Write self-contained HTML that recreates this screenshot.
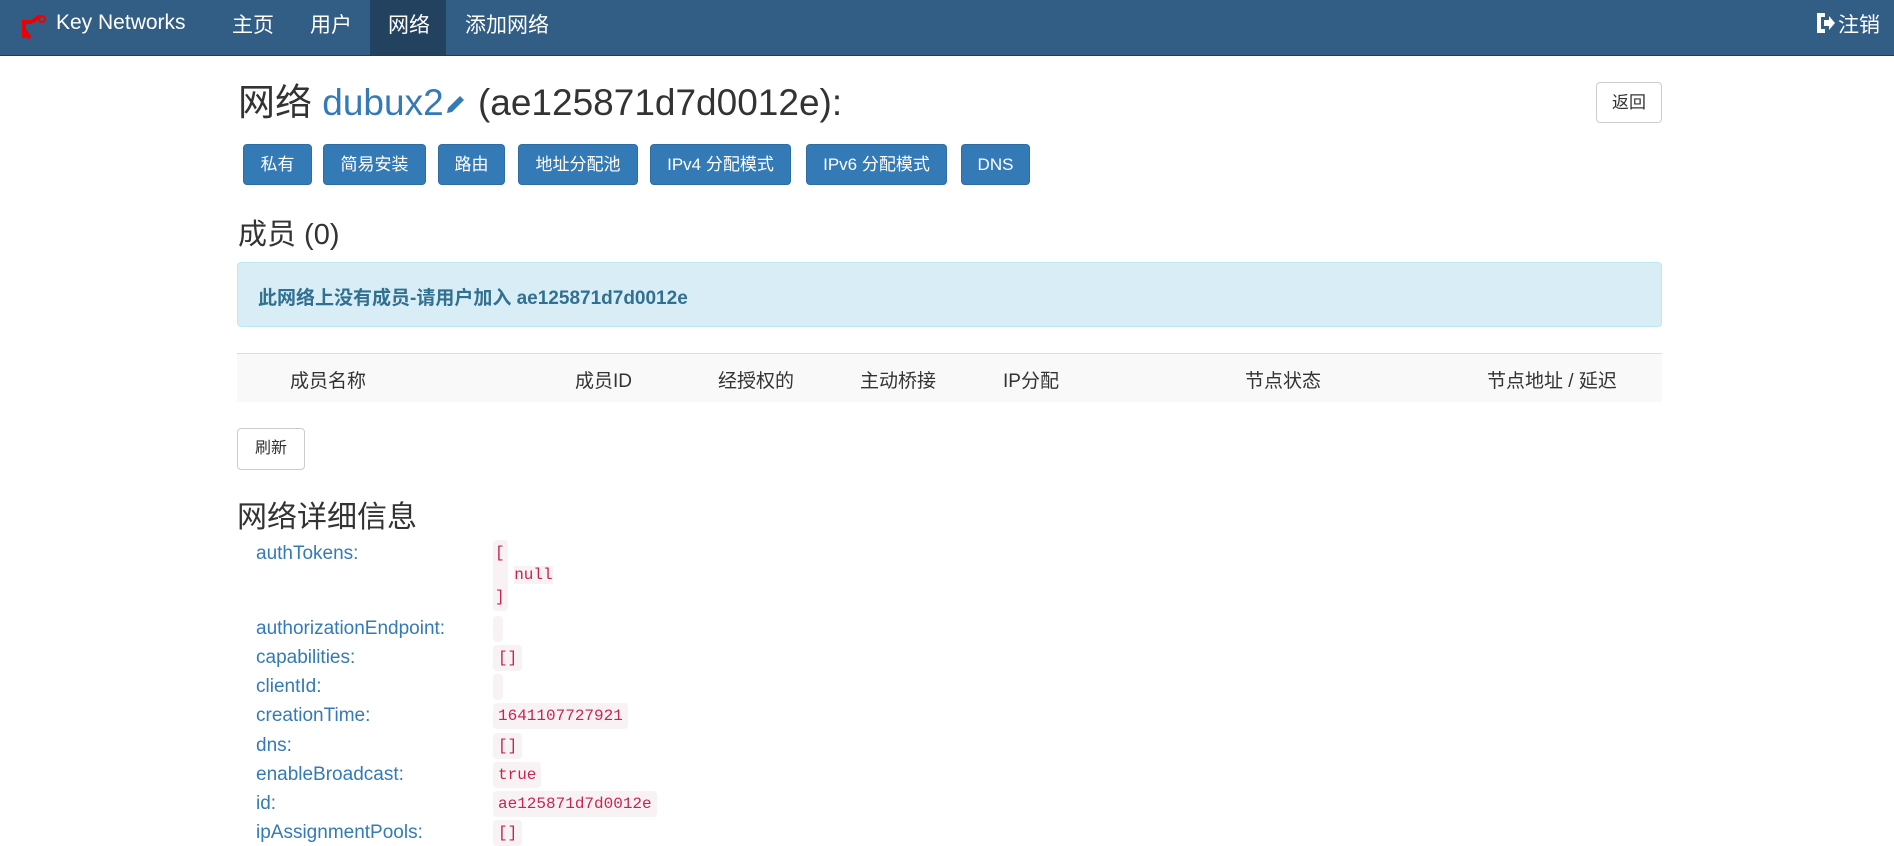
<!DOCTYPE html>
<html><head><meta charset="utf-8"><style>
*{box-sizing:border-box;margin:0;padding:0}
body{width:1894px;height:836px;overflow:hidden;background:#fff;font-family:"Liberation Sans","Noto Sans CJK SC",sans-serif;color:#333;position:relative}
.a{position:absolute;white-space:nowrap}
.nav{position:absolute;left:0;top:0;width:1894px;height:56px;background:#325d84;border-bottom:1px solid #1f3a55}
.nav .a{color:#fff;font-size:21px;top:9px}
.btn{position:absolute;background:#337ab7;border:1px solid #2e6da4;border-radius:4px;color:#fff;font-size:17px;text-align:center;line-height:39px;height:41px;top:144px}
.dbtn{position:absolute;background:#fff;border:1px solid #ccc;border-radius:4px;color:#333;font-size:17px;text-align:center}
.th{position:absolute;top:366px;font-size:19px;color:#333}
.lbl{position:absolute;left:256px;font-size:19px;color:#337ab7}
.code{position:absolute;left:493px;font-family:"Liberation Mono","DejaVu Sans Mono",monospace;font-size:16px;color:#c7254e;background:#f9f2f4;border-radius:4px;padding:2px 5px;line-height:22px;white-space:pre}
</style></head><body>
<div class="nav">
<svg class="a" style="left:20px;top:14px" width="28" height="26" viewBox="0 0 28 26"><path d="M2 8h10M4 8v16M4 16l6 8M12 8l8-6" stroke="#e00" stroke-width="4" fill="none"/><circle cx="22" cy="5" r="3" fill="none" stroke="#e00" stroke-width="2"/></svg>
<div class="a" style="left:56px;color:#fff;top:11px!important">Key Networks</div>
<div class="a" style="left:232px">主页</div>
<div class="a" style="left:310px">用户</div>
<div style="position:absolute;left:370px;top:0;width:76px;height:55px;background:#234260"></div>
<div class="a" style="left:388px">网络</div>
<div class="a" style="left:465px">添加网络</div>
<svg class="a" style="left:1816px;top:13px" width="20" height="20" viewBox="0 0 20 20"><path d="M9 2H3v16h6" stroke="#fff" stroke-width="4" fill="none"/><path d="M8 7h5V3l6 7-6 7v-4H8z" fill="#fff"/></svg>
<div class="a" style="left:1838px">注销</div>
</div>
<div class="a" style="left:238px;top:72px;font-size:37px;color:#333">网络 <span style="color:#337ab7">dubux2</span><svg width="24" height="24" viewBox="0 0 24 24" style="vertical-align:-1px"><path d="M3 21l1-5L16 4l4 4L8 20z" fill="#337ab7"/></svg> (ae125871d7d0012e):</div>
<div class="dbtn" style="left:1596px;top:82px;width:66px;height:41px;line-height:39px">返回</div>
<div class="btn" style="left:243px;width:69px">私有</div>
<div class="btn" style="left:323px;width:103px">简易安装</div>
<div class="btn" style="left:438px;width:67px">路由</div>
<div class="btn" style="left:518px;width:120px">地址分配池</div>
<div class="btn" style="left:650px;width:141px">IPv4 分配模式</div>
<div class="btn" style="left:806px;width:141px">IPv6 分配模式</div>
<div class="btn" style="left:961px;width:69px">DNS</div>
<div class="a" style="left:238px;top:211px;font-size:29px">成员 (0)</div>
<div style="position:absolute;left:237px;top:262px;width:1425px;height:65px;background:#d9edf7;border:1px solid #bce8f1;border-radius:4px"></div>
<div class="a" style="left:258px;top:283px;font-size:19px;font-weight:bold;color:#31708f">此网络上没有成员-请用户加入 ae125871d7d0012e</div>
<div style="position:absolute;left:237px;top:353px;width:1425px;height:49px;background:#f9f9f9;border-top:1px solid #ddd"></div>
<div class="th" style="left:290px">成员名称</div>
<div class="th" style="left:575px">成员ID</div>
<div class="th" style="left:718px">经授权的</div>
<div class="th" style="left:860px">主动桥接</div>
<div class="th" style="left:1003px">IP分配</div>
<div class="th" style="left:1245px">节点状态</div>
<div class="th" style="left:1487px">节点地址 / 延迟</div>
<div class="dbtn" style="left:237px;top:428px;width:68px;height:42px;line-height:40px;font-size:16px">刷新</div>
<div class="a" style="left:237px;top:492px;font-size:30px">网络详细信息</div>
<div class="lbl" style="top:543px">authTokens:</div>
<div class="code" style="top:540px;padding:2px 5px 2px 2px;background:none"><span style="background:#f9f2f4;position:absolute;left:0;top:0;width:15px;height:71px;border-radius:4px"></span><span style="position:relative">[
  <span style="background:#f9f2f4">null</span>
]</span></div>
<div class="lbl" style="top:618px">authorizationEndpoint:</div>
<div class="code" style="top:616px;width:10px;height:26px"></div>
<div class="lbl" style="top:647px">capabilities:</div>
<div class="code" style="top:645px">[]</div>
<div class="lbl" style="top:676px">clientId:</div>
<div class="code" style="top:674px;width:10px;height:26px"></div>
<div class="lbl" style="top:705px">creationTime:</div>
<div class="code" style="top:703px">1641107727921</div>
<div class="lbl" style="top:735px">dns:</div>
<div class="code" style="top:733px">[]</div>
<div class="lbl" style="top:764px">enableBroadcast:</div>
<div class="code" style="top:762px">true</div>
<div class="lbl" style="top:793px">id:</div>
<div class="code" style="top:791px">ae125871d7d0012e</div>
<div class="lbl" style="top:822px">ipAssignmentPools:</div>
<div class="code" style="top:820px">[]</div>
</body></html>
